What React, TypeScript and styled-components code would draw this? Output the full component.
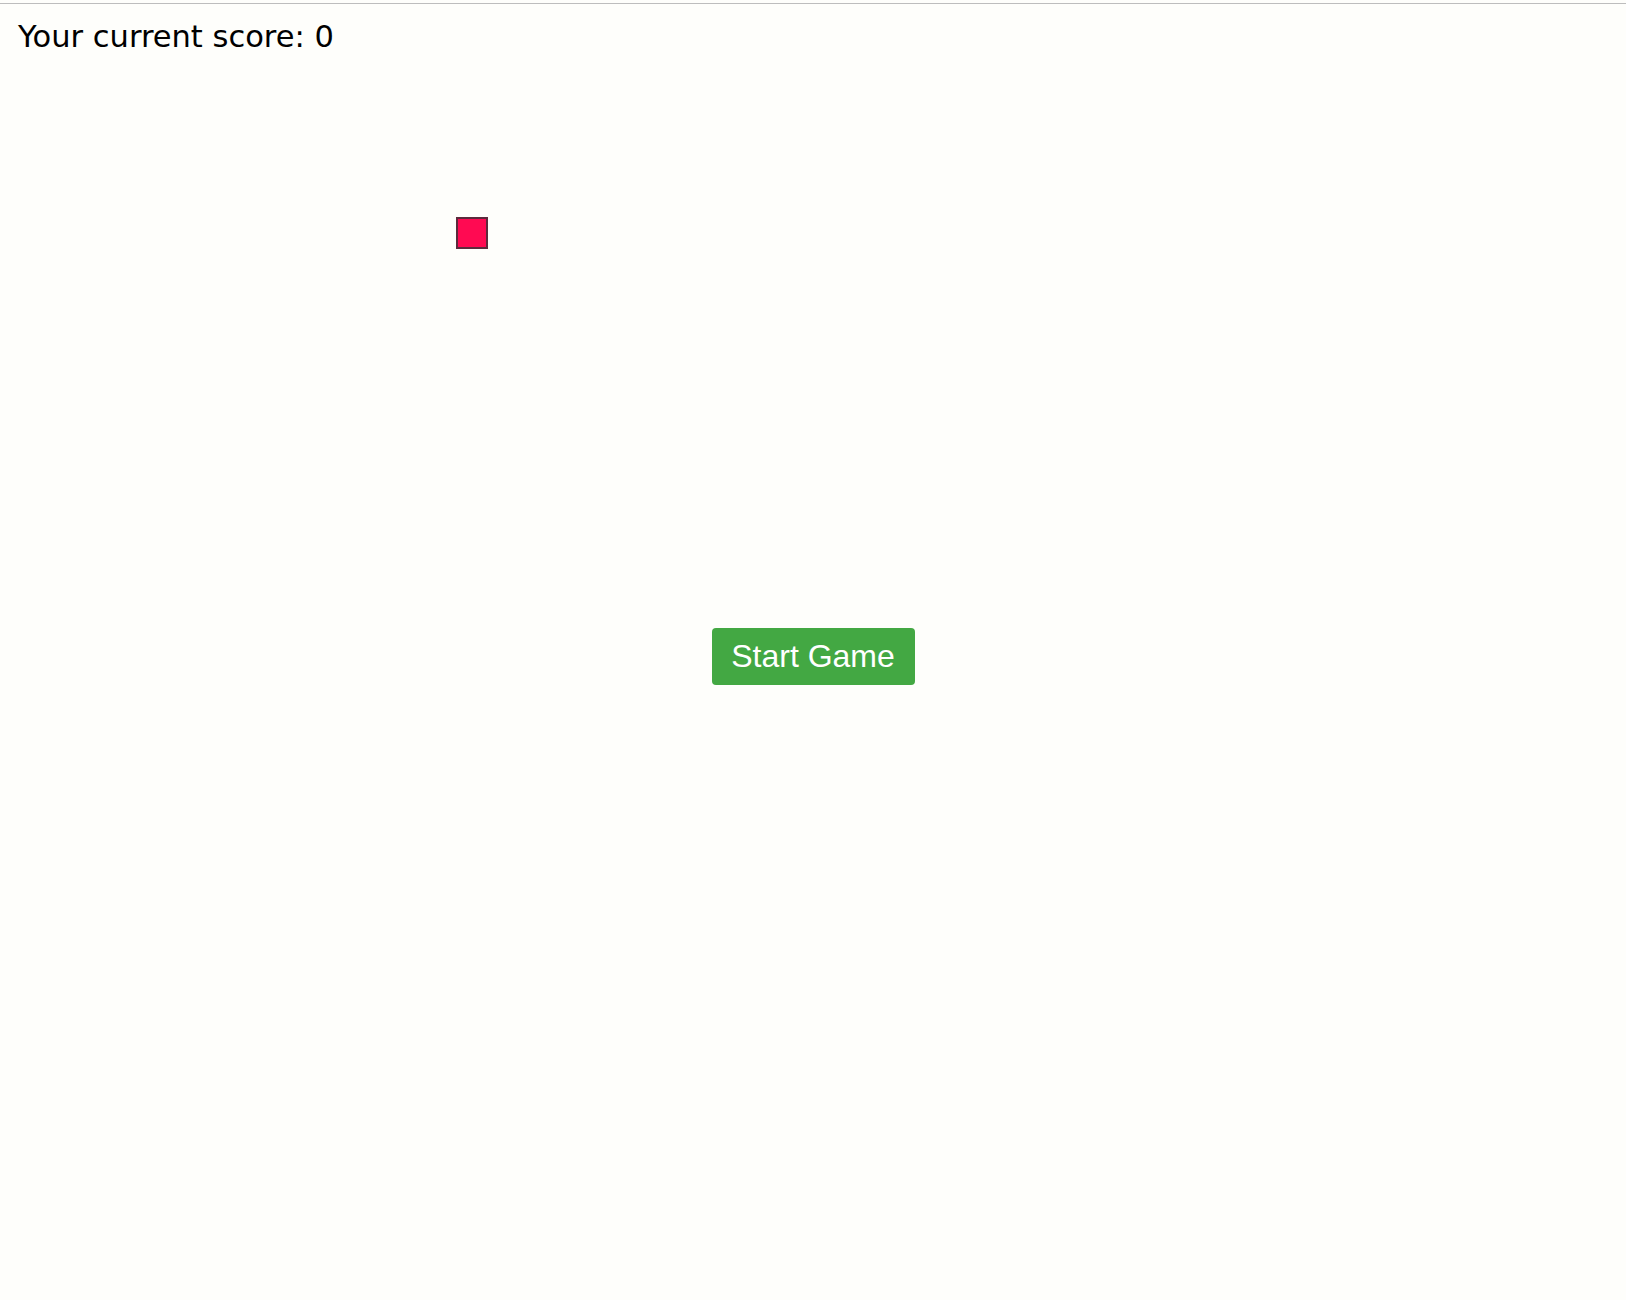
import { createGlobalStyle, styled } from 'styled-components';

const GlobalStyle = createGlobalStyle`
  html, body {
    margin: 0;
    padding: 0;
    background-color: #fefefb;
  }
`;

// 게임 보드
const Board = styled.div`
  position: relative;
  box-sizing: border-box;
  display: flex;
  flex-direction: column;
  height: 1297px;
  margin-top: 3px;
  border-top: 1px solid #bdbdbd;
`;

const Score = styled.div`
  padding: 13px 0 0 18px;
  color: #000;
  font-family: 'DejaVu Sans', 'Liberation Sans', sans-serif;
  font-size: 30.5px;
  line-height: 40px;
`;

// 먹이 블록
const Food = styled.div<{ $x: number; $y: number }>`
  position: absolute;
  left: ${(p) => p.$x}px;
  top: ${(p) => p.$y}px;
  box-sizing: border-box;
  width: 32px;
  height: 32px;
  background-color: #ff0a52;
  border: 2px solid #5c2a3c;
`;

const Center = styled.div`
  display: flex;
  flex: 1;
  align-items: center;
  justify-content: center;
  padding-bottom: 44px;
`;

const StartButton = styled.button`
  width: 203px;
  height: 57px;
  padding: 0;
  border: none;
  border-radius: 4px;
  background-color: #43a843;
  color: #fff;
  font-family: 'Liberation Sans', Arial, sans-serif;
  font-size: 32px;
  cursor: pointer;
`;

const App = () => {
  return (
    <>
      <GlobalStyle />
      <Board>
        <Score>Your current score: 0</Score>
        <Food $x={456} $y={213} />
        <Center>
          <StartButton>Start Game</StartButton>
        </Center>
      </Board>
    </>
  );
};

export default App;
